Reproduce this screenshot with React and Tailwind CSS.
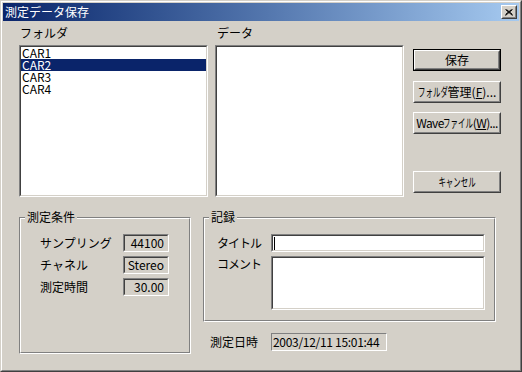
import React from 'react';

const face = 'bg-[#d4d0c8]';

// 2px sunken well (listbox, edit, readonly field)
const Sunken = ({ className = '', inner = 'bg-white', children }) => (
  <div className={`border border-t-[#808080] border-l-[#808080] border-r-white border-b-white ${className}`}>
    <div className={`h-full border border-t-[#404040] border-l-[#404040] border-r-[#d4d0c8] border-b-[#d4d0c8] ${inner}`}>
      {children}
    </div>
  </div>
);

const Raised = ({ className = '', children }) => (
  <div className={`border border-t-white border-l-white border-r-[#404040] border-b-[#404040] ${className}`}>
    <div className="h-full border border-t-[#d4d0c8] border-l-[#d4d0c8] border-r-[#808080] border-b-[#808080] flex items-center justify-center">
      {children}
    </div>
  </div>
);

const Button = ({ children, isDefault = false, className = '' }) =>
  isDefault ? (
    <div className={`h-[22px] border border-black ${className}`}>
      <Raised className="h-full">{children}</Raised>
    </div>
  ) : (
    <Raised className={`h-[22px] ${className}`}>{children}</Raised>
  );

// narrow kana as drawn on the buttons
const Narrow = ({ children, w }) => (
  <span className={`inline-flex justify-center overflow-visible ${w}`}>
    <span className="inline-block scale-x-[0.62] whitespace-nowrap">{children}</span>
  </span>
);

const Group = ({ label, className = '', children }) => (
  <div className={`relative border border-t-[#808080] border-l-[#808080] border-r-white border-b-white ${className}`}>
    <div className="h-full border border-t-white border-l-white border-r-[#808080] border-b-[#808080]">
      {children}
    </div>
    <span className="absolute -top-[7px] left-[5px] px-[2px] bg-[#d4d0c8] leading-[12px]">{label}</span>
  </div>
);

const ReadField = ({ value }) => (
  <Sunken className="h-[18px] w-[46px]" inner="bg-[#d4d0c8]">
    <div className="h-full leading-[14px] text-right pr-[3px]">{value}</div>
  </Sunken>
);

const folders = ['CAR1', 'CAR2', 'CAR3', 'CAR4'];

const App = () => {
  return (
    <div className={`w-[522px] h-[372px] ${face} border border-t-[#d4d0c8] border-l-[#d4d0c8] border-r-[#404040] border-b-[#404040] font-['Noto_Sans_CJK_JP',sans-serif] text-[12px] text-black`}>
      <div className="h-full border border-t-white border-l-white border-r-[#808080] border-b-[#808080] p-px flex flex-col">
        {/* title bar */}
        <div className="h-[18px] flex items-center justify-between bg-gradient-to-r from-[#0a246a] to-[#a6caf0]">
          <span className="pl-[2px] text-white leading-[18px]">測定データ保存</span>
          <Raised className="w-[16px] h-[14px] mr-[2px] bg-[#d4d0c8]">
            <svg width="8" height="7" viewBox="0 0 8 7">
              <path d="M0.5 0.5 L7.5 6.5 M1.5 0.5 L7.5 5.5 M7.5 0.5 L0.5 6.5 M6.5 0.5 L0.5 5.5" stroke="#000" strokeWidth="1" fill="none" />
            </svg>
          </Raised>
        </div>

        {/* top section */}
        <div className="flex pl-[16px]">
          <div className="w-[189px]">
            <div className="h-[24px] leading-[24px] pl-px">フォルダ</div>
            <Sunken className="h-[152px]">
              <div className="flex flex-col">
                {folders.map((f) => (
                  <div
                    key={f}
                    className={`h-[12px] leading-[12px] pl-[1px] ${f === 'CAR2' ? 'bg-[#0a246a] text-white' : ''}`}
                  >
                    {f}
                  </div>
                ))}
              </div>
            </Sunken>
          </div>
          <div className="w-[189px] ml-[7px]">
            <div className="h-[24px] leading-[24px] pl-[2px]">データ</div>
            <Sunken className="h-[152px]" />
          </div>
          <div className="w-[88px] ml-[9px] pt-[28px] flex flex-col">
            <Button isDefault>保存</Button>
            <Button className="mt-[10px]">
              <Narrow w="w-[30px]">フォルダ</Narrow>管理(<span className="underline">F</span>)...
            </Button>
            <Button className="mt-[9px]">
              <span className="tracking-[-0.6px]">Wave</span>
              <Narrow w="w-[29px]">ファイル</Narrow>
              <span className="tracking-[-0.6px]">(<span className="underline">W</span>)...</span>
            </Button>
            <Button className="mt-[37px]">
              <Narrow w="w-[37px]">キャンセル</Narrow>
            </Button>
          </div>
        </div>

        {/* bottom section */}
        <div className="flex pl-[16px] mt-[20px]">
          <Group label="測定条件" className="w-[172px] h-[137px]">
            <div className="pt-[15px] pl-[19px] grid grid-cols-[83px_46px] gap-y-[4px] items-center">
              <span className="leading-[18px]">サンプリング</span>
              <ReadField value="44100" />
              <span className="leading-[18px]">チャネル</span>
              <ReadField value="Stereo" />
              <span className="leading-[18px]">測定時間</span>
              <ReadField value="30.00" />
            </div>
          </Group>

          <div className="w-[293px] ml-[12px] flex flex-col">
            <Group label="記録" className="h-[105px]">
              <div className="pt-[15px] pl-[12px] grid grid-cols-[54px_214px] gap-y-[4px]">
                <span className="leading-[18px] tracking-[-1px]">タイトル</span>
                <Sunken className="h-[18px]">
                  <div className="h-full flex items-center pl-[1px]">
                    <div className="w-px h-[13px] bg-black" />
                  </div>
                </Sunken>
                <span className="leading-[14px] pt-[1px] tracking-[-1px]">コメント</span>
                <Sunken className="h-[54px]" />
              </div>
            </Group>
            <div className="flex items-center mt-[11px] pl-[7px]">
              <span className="w-[61px] leading-[18px]">測定日時</span>
              <div className="w-[116px] h-[18px] border border-t-[#808080] border-l-[#808080] border-r-white border-b-white leading-[16px] pl-px tracking-[-0.3px]">
                2003/12/11 15:01:44
              </div>
            </div>
          </div>
        </div>
      </div>
    </div>
  );
};

export default App;
